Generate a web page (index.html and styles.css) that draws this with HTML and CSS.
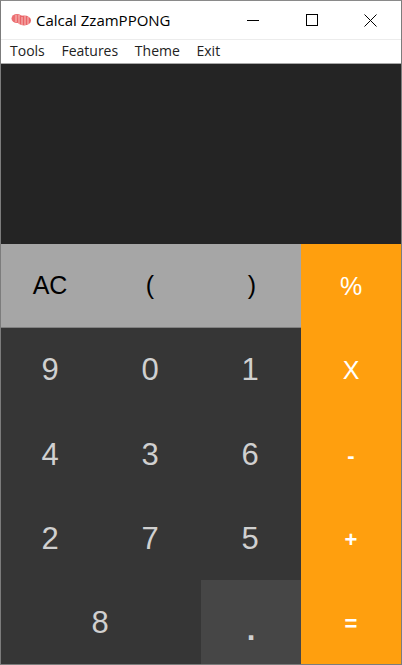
FILE: index.html
```html
<!DOCTYPE html>
<html lang="en">
<head>
<meta charset="utf-8">
<title>Calcal ZzamPPONG</title>
<link rel="stylesheet" href="styles.css">
</head>
<body>
<div class="window">
  <header class="titlebar">
    <svg class="app-icon" width="22" height="16" viewBox="0 0 22 16">
      <ellipse cx="6" cy="6.500" rx="5.500" ry="4.500" fill="#ec6f72"/>
      <ellipse cx="13" cy="8.500" rx="7" ry="5" fill="#ea6468"/>
      <path d="M5 3v7M8 3v9M11 5v8M14 4v9M17 5v7" stroke="#f8c4c0" stroke-width="1"/>
    </svg>
    <span class="title">Calcal ZzamPPONG</span>
    <div class="controls">
      <span class="control"><svg width="12" height="12" viewBox="0 0 12 12"><path d="M0 6.500h12" stroke="#000"/></svg></span>
      <span class="control"><svg width="12" height="12" viewBox="0 0 12 12"><rect x=".5" y=".5" width="11" height="11" fill="none" stroke="#000"/></svg></span>
      <span class="control"><svg width="13" height="13" viewBox="0 0 13 13"><path d="M.5.5l12 12M12.500.5l-12 12" stroke="#000"/></svg></span>
    </div>
  </header>
  <nav class="menubar">
    <span class="menu">Tools</span>
    <span class="menu">Features</span>
    <span class="menu">Theme</span>
    <span class="menu">Exit</span>
  </nav>
  <div class="display"></div>
  <main class="keypad">
    <button class="key fn">AC</button>
    <button class="key fn">(</button>
    <button class="key fn close">)</button>
    <button class="key op">%</button>
    <button class="key">9</button>
    <button class="key">0</button>
    <button class="key">1</button>
    <button class="key op">X</button>
    <button class="key low">4</button>
    <button class="key low">3</button>
    <button class="key low">6</button>
    <button class="key op sign">-</button>
    <button class="key low">2</button>
    <button class="key low">7</button>
    <button class="key low">5</button>
    <button class="key op sign">+</button>
    <button class="key low wide">8</button>
    <button class="key dot">.</button>
    <button class="key op sign">=</button>
  </main>
</div>
</body>
</html>
```
FILE: styles.css
```css
* { box-sizing: border-box; }
html, body { margin: 0; padding: 0; height: 100%; overflow: hidden; background: #fff; }
.window {
  width: 402px;
  height: 665px;
  display: flex;
  flex-direction: column;
  border: 1px solid #7c7c7c;
  border-top-color: #8a8a8a;
}
.titlebar {
  height: 39px;
  flex: none;
  display: flex;
  align-items: center;
  padding-left: 10px;
  background: #fff;
  border-bottom: 1px solid #ececec;
}
.app-icon { flex: none; margin-top: -1px; }
.title {
  margin-left: 3px;
  font: 15px "Open Sans", sans-serif;
  color: #000;
}
.controls { margin-left: auto; display: flex; padding-right: 1px; }
.control {
  width: 59px;
  height: 38px;
  display: flex;
  align-items: center;
  justify-content: center;
}
.menubar {
  height: 24px;
  flex: none;
  display: flex;
  align-items: center;
  gap: 16.7px;
  padding: 0 0 2px 9px;
  background: #fff;
  border-bottom: 1px solid #a8a8a8;
  font: 14px "Open Sans", sans-serif;
  color: #222;
}
.display { height: 180px; flex: none; background: #242424; }
.keypad {
  flex: 1;
  display: grid;
  grid-template-columns: 100px 100px 100px 100px;
  grid-auto-rows: 84px;
  background: #363636;
}
.key {
  border: 0;
  margin: 0;
  padding: 0 2px 0 0;
  background: #363636;
  color: #d0d0d0;
  font: 31px "Liberation Sans", sans-serif;
}
.low { padding-top: 2px; }
.fn { background: #a6a6a6; color: #000; font-size: 25px; border-bottom: 1px solid #808080; }
.close { padding: 0 0 0 2px; }
.op { background: #ff9f0e; color: #fff; font-size: 25px; padding: 0; }
.sign { font-size: 22px; font-weight: bold; padding-top: 3px; }
.wide { grid-column: span 2; }
.dot { background: #464646; padding: 15px 0 0; font-weight: bold; }
```
